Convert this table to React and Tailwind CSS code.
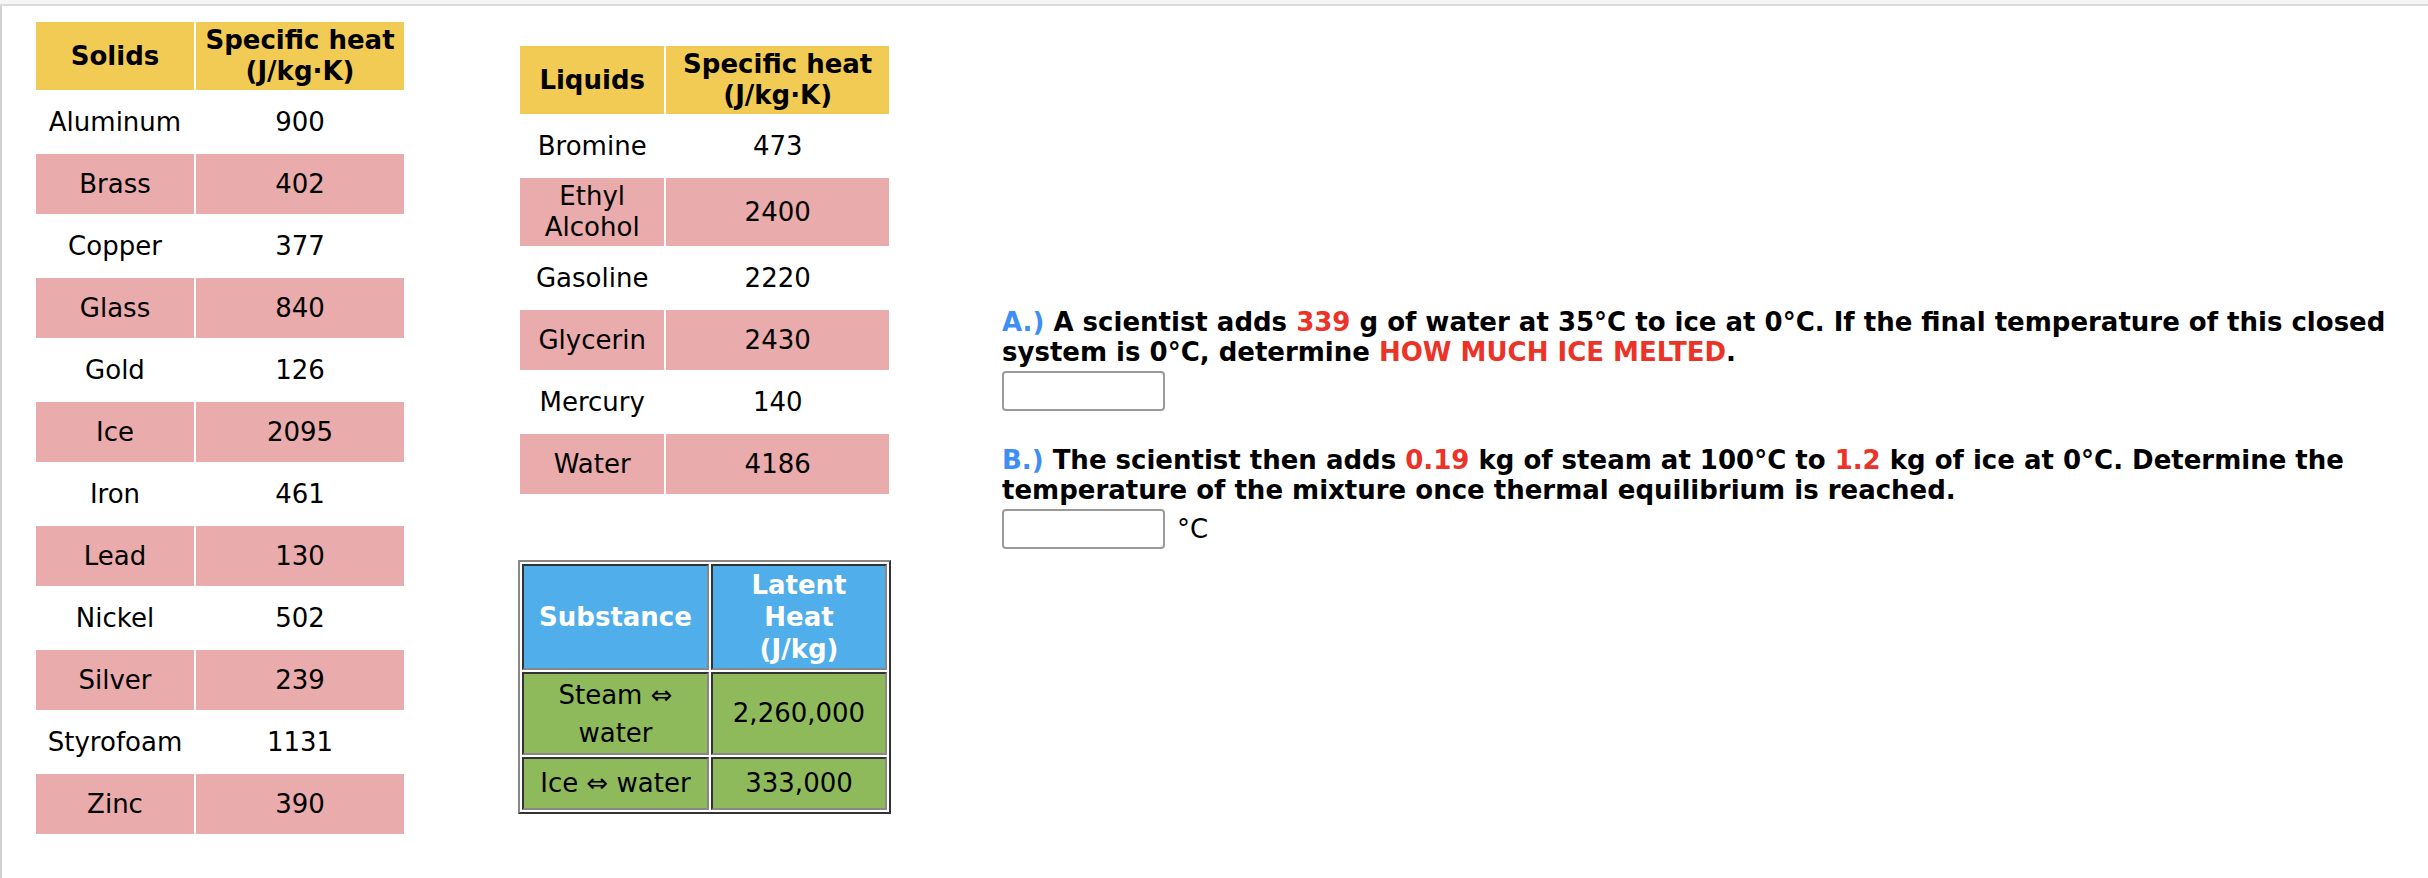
const solids = [
  ["Aluminum", "900"],
  ["Brass", "402"],
  ["Copper", "377"],
  ["Glass", "840"],
  ["Gold", "126"],
  ["Ice", "2095"],
  ["Iron", "461"],
  ["Lead", "130"],
  ["Nickel", "502"],
  ["Silver", "239"],
  ["Styrofoam", "1131"],
  ["Zinc", "390"],
];

const liquids = [
  [["Bromine"], "473"],
  [["Ethyl", "Alcohol"], "2400"],
  [["Gasoline"], "2220"],
  [["Glycerin"], "2430"],
  [["Mercury"], "140"],
  [["Water"], "4186"],
];

const verdana = { fontFamily: '"DejaVu Sans", Verdana, sans-serif' };

function HeatTable({ label, rows, w1, w2 }) {
  return (
    <table className="border-separate border-spacing-[2px] text-[26px] leading-[31px] text-black" style={verdana}>
      <thead>
        <tr>
          <th className={`${w1} h-[68px] bg-[#f2cb55] p-0 py-[3px] text-center font-bold`}>{label}</th>
          <th className={`${w2} h-[68px] bg-[#f2cb55] p-0 py-[3px] text-center font-bold`}>
            Specific heat
            <br />
            (J/kg·K)
          </th>
        </tr>
      </thead>
      <tbody>
        {rows.map(([name, val], i) => {
          const bg = i % 2 === 1 ? "bg-[#e9abab]" : "bg-white";
          const lines = Array.isArray(name) ? name : [name];
          return (
            <tr key={i}>
              <td className={`${bg} h-[60px] p-0 py-[3px] text-center`}>
                {lines.map((l, j) => (
                  <div key={j}>{l}</div>
                ))}
              </td>
              <td className={`${bg} h-[60px] p-0 py-[3px] text-center`}>{val}</td>
            </tr>
          );
        })}
      </tbody>
    </table>
  );
}

function LatentTable() {
  const cell = "border-2 border-t-[#333] border-l-[#333] border-r-[#888] border-b-[#888] p-0 text-center";
  return (
    <table
      className="mt-[64px] border-separate border-spacing-[2px] border-2 border-t-[#888] border-l-[#888] border-r-[#333] border-b-[#333] text-[26px] leading-[31px] text-black"
      style={verdana}
    >
      <thead>
        <tr>
          <th className={`${cell} w-[187px] h-[106px] bg-[#50aeea] font-bold text-white`}>Substance</th>
          <th className={`${cell} w-[176px] h-[106px] bg-[#50aeea] font-bold text-white leading-[32px]`}>
            Latent
            <br />
            Heat
            <br />
            (J/kg)
          </th>
        </tr>
      </thead>
      <tbody>
        <tr>
          <td className={`${cell} h-[83px] bg-[#8fba5b] leading-[38px]`}>
            Steam ⇔
            <br />
            water
          </td>
          <td className={`${cell} h-[83px] bg-[#8fba5b]`}>2,260,000</td>
        </tr>
        <tr>
          <td className={`${cell} h-[53px] bg-[#8fba5b]`}>Ice ⇔ water</td>
          <td className={`${cell} h-[53px] bg-[#8fba5b]`}>333,000</td>
        </tr>
      </tbody>
    </table>
  );
}

function AnswerBox() {
  return <div className="h-[40px] w-[163px] rounded-[4px] border-2 border-[#9a9a9a] bg-white" />;
}

export default function App() {
  return (
    <div className="h-[878px] w-[2428px] overflow-hidden bg-white">
      <div className="h-[6px] border-b-2 border-[#dcdcdc] bg-[#f5f5f5]" />
      <div className="flex h-[872px] items-start border-l-2 border-[#d0d0d0] pl-[32px] pt-[14px]">
        <HeatTable label="Solids" rows={solids} w1="w-[158px]" w2="w-[208px]" />

        <div className="ml-[112px] mt-[24px] flex flex-col">
          <HeatTable label="Liquids" rows={liquids} w1="w-[144px]" w2="w-[222px]" />
          <LatentTable />
        </div>

        <div className="ml-[111px] mt-[287px] whitespace-nowrap text-[26px] font-bold leading-[30px] text-black" style={verdana}>
          <p>
            <span className="text-[#3f8ef5]">A.)</span> A scientist adds <span className="text-[#ec3327]">339</span> g of water at 35°C to ice at 0°C. If the final temperature of this closed
            <br />
            system is 0°C, determine <span className="text-[#ec3327]">HOW MUCH ICE MELTED</span>.
          </p>
          <div className="mt-[4px]">
            <AnswerBox />
          </div>

          <p className="mt-[34px]">
            <span className="text-[#3f8ef5]">B.)</span> The scientist then adds <span className="text-[#ec3327]">0.19</span> kg of steam at 100°C to <span className="text-[#ec3327]">1.2</span> kg of ice at 0°C. Determine the
            <br />
            temperature of the mixture once thermal equilibrium is reached.
          </p>
          <div className="mt-[4px] flex items-center gap-[12px]">
            <AnswerBox />
            <span className="font-normal">°C</span>
          </div>
        </div>
      </div>
    </div>
  );
}
